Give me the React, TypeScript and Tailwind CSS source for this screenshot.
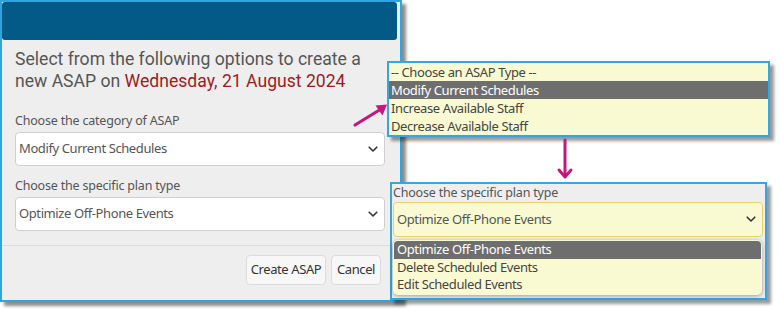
import React from "react";

const sans = "font-['Noto_Sans','Open_Sans',sans-serif]";
const opt = `${sans} text-[13px] tracking-[-0.4px]`;
const lbl = `${sans} text-[12.5px] tracking-[-0.2px] leading-[18px] text-[#555]`;

const Chevron = () => (
    <svg width="10" height="7" viewBox="0 0 10 7" className="shrink-0">
        <path d="M1.2 1.2 L5 5 L8.8 1.2" fill="none" stroke="#333" strokeWidth="1.6" strokeLinecap="round" strokeLinejoin="round" />
    </svg>
);

const typeOptions = [
    "-- Choose an ASAP Type --",
    "Modify Current Schedules",
    "Increase Available Staff",
    "Decrease Available Staff",
];

const planOptions = ["Optimize Off-Phone Events", "Delete Scheduled Events", "Edit Scheduled Events"];

const Arrows = () => (
    <svg width="780" height="312" className="absolute left-0 top-0 pointer-events-none">
        {/* diagonal arrow to the ASAP type list */}
        <line x1="355" y1="125" x2="381" y2="109" stroke="#c4187f" strokeWidth="3.2" strokeLinecap="round" />
        <path d="M387 104.5 L375.5 105.5 L382.5 115.5 Z" fill="#c4187f" />
        {/* down arrow to the plan panel */}
        <line x1="565" y1="140" x2="565" y2="176" stroke="#c4187f" strokeWidth="3" strokeLinecap="round" />
        <path d="M559 170 L565 177 L571 170" fill="none" stroke="#c4187f" strokeWidth="3" strokeLinecap="round" strokeLinejoin="round" />
    </svg>
);

export default function App() {
    return (
        <div className="relative w-[780px] h-[312px] bg-white overflow-hidden">
            {/* main dialog */}
            <div className="w-[402px] h-[302px] border-2 border-[#2fa4de] bg-[#eeeeee] shadow-[4px_4px_3px_rgba(0,0,0,0.45)] flex flex-col">
                <div className="h-[38px] mr-[3px] bg-[#035a86] rounded-[3px]"></div>

                <div className="pl-[13px] pr-[15px] pt-[8px]">
                    <h2 className="font-['Roboto',sans-serif] text-[17.6px] leading-[22px] text-[#555]">
                        <div>Select from the following options to create a</div>
                        <div>
                            new ASAP on <span className="text-[#9e1b1f]">Wednesday, 21 August 2024</span>
                        </div>
                    </h2>

                    <label className={`${lbl} block mt-[20px]`}>Choose the category of ASAP</label>
                    <div className="mt-[2px] h-[34px] bg-white border border-[#cfcfcf] rounded-[4px] flex items-center justify-between pl-[3px] pr-[6px]">
                        <span className={`${opt} text-[#555]`}>Modify Current Schedules</span>
                        <Chevron />
                    </div>

                    <label className={`${lbl} block mt-[11px]`}>Choose the specific plan type</label>
                    <div className="mt-[2px] h-[34px] bg-white border border-[#cfcfcf] rounded-[4px] flex items-center justify-between pl-[3px] pr-[6px]">
                        <span className={`${opt} text-[#555]`}>Optimize Off-Phone Events</span>
                        <Chevron />
                    </div>
                </div>

                <div className="mt-[14px] border-t border-[#dddddd]"></div>

                <div className="flex justify-end gap-[5px] pr-[19px] pt-[9px]">
                    <button className={`${opt} whitespace-nowrap h-[30px] w-[80px] bg-[#f7f7f7] border border-[#dcdcdc] rounded-[4px] text-[#333]`}>
                        Create ASAP
                    </button>
                    <button className={`${opt} whitespace-nowrap h-[30px] w-[50px] bg-[#f7f7f7] border border-[#dcdcdc] rounded-[4px] text-[#333]`}>
                        Cancel
                    </button>
                </div>
            </div>

            {/* ASAP type list, callout */}
            <div className="absolute left-[387px] top-[61px] w-[383px] border-2 border-[#35a6df] bg-[#fafad2] shadow-[4px_4px_3px_rgba(0,0,0,0.4)]">
                {typeOptions.map((o, i) => (
                    <div
                        key={o}
                        className={`${opt} h-[18px] leading-[18px] pl-[2px] ${i === 1 ? "bg-[#6e6e6e] text-white" : "text-[#444]"}`}
                    >
                        {o}
                    </div>
                ))}
            </div>

            {/* plan type panel, callout */}
            <div className="absolute left-[390px] top-[182px] w-[377px] h-[118px] border-2 border-[#35a6df] bg-[#eeeeee] shadow-[4px_4px_3px_rgba(0,0,0,0.4)] pl-[1px] pr-[2px]">
                <div className={lbl}>Choose the specific plan type</div>
                <div className="h-[35px] bg-[#fafad2] border border-[#ecd06a] rounded-[4px] flex items-center justify-between pl-[3px] pr-[6px]">
                    <span className={`${opt} text-[#555]`}>Optimize Off-Phone Events</span>
                    <Chevron />
                </div>
                <div className="mt-[3px] mr-[1px] bg-[#fafad2] rounded-[5px] shadow-[0_1px_4px_rgba(0,0,0,0.35)] p-[1px]">
                    {planOptions.map((o, i) => (
                        <div
                            key={o}
                            className={`${opt} h-[17.5px] leading-[17.5px] pl-[3px] ${i === 0 ? "bg-[#6e6e6e] text-white rounded-t-[4px]" : "text-[#444]"}`}
                        >
                            {o}
                        </div>
                    ))}
                </div>
            </div>

            <Arrows />
        </div>
    );
}
